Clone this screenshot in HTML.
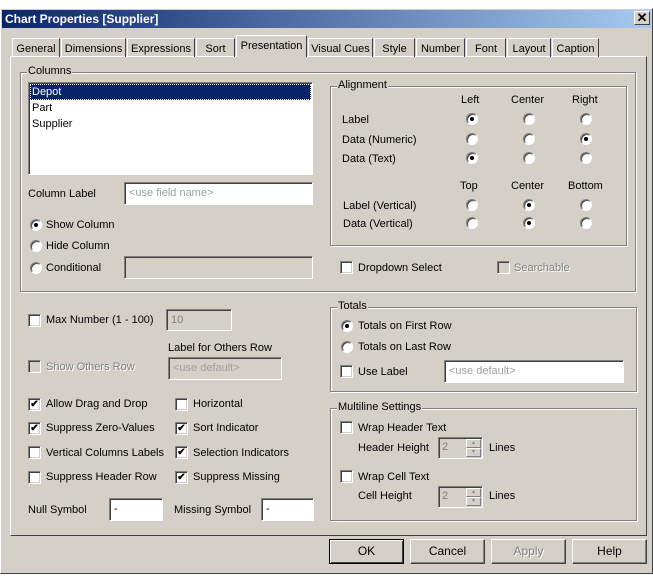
<!DOCTYPE html>
<html><head><meta charset="utf-8"><style>
*{box-sizing:border-box}
body{margin:0;width:653px;height:578px;background:#fff;position:relative;overflow:hidden;font-family:"Liberation Sans",sans-serif;font-size:11px;color:#000}
.a{position:absolute;white-space:nowrap}
.win{position:absolute;left:0;top:8px;width:653px;height:566px;background:#d4d0c8;border:1px solid #fff;border-right-color:#404040;border-bottom-color:#404040}
.title{position:absolute;left:2px;top:10px;width:649px;height:18px;background:linear-gradient(90deg,#0a246a,#a6caf0);color:#fff;font-weight:bold;font-size:12px;padding:2px 3px}
.tab{position:absolute;top:38px;height:19px;border:1px solid #fff;border-bottom:none;border-right:1px solid #404040;padding:4px 0 0;text-align:center;white-space:nowrap}
.panel{position:absolute;left:10px;top:56px;width:637px;height:480px;border:1px solid #fff;border-right-color:#404040;border-bottom-color:#404040}
.grp{position:absolute;border:1px solid #808080;box-shadow:1px 1px 0 #fff,inset 1px 1px 0 #fff}
.gl{position:absolute;background:#d4d0c8;padding:0 1px;top:-8px;left:6px}
.inp{position:absolute;background:#fff;border:1px solid #808080;border-right-color:#fff;border-bottom-color:#fff;box-shadow:inset 1px 1px 0 #404040;padding:4px 4px;color:#a0a0a0;white-space:nowrap}
.dis{background:#d4d0c8}
.cb{position:absolute;width:13px;height:13px;background:#fff;border:1px solid #808080;border-right-color:#fff;border-bottom-color:#fff;box-shadow:inset 1px 1px 0 #404040,inset -1px -1px 0 #d4d0c8;font-size:10px;line-height:11px;text-align:center;font-weight:bold}
.rb{position:absolute;width:12px;height:12px;border-radius:50%;background:#fff;border:1px solid #808080;border-right-color:#fff;border-bottom-color:#fff;box-shadow:inset 1px 1px 0 #404040}
.rb.on::after{content:"";position:absolute;left:3px;top:3px;width:4px;height:4px;border-radius:50%;background:#000}
.btn{position:absolute;top:539px;width:75px;height:25px;border:1px solid #fff;border-right-color:#404040;border-bottom-color:#404040;box-shadow:inset -1px -1px 0 #808080;text-align:center;line-height:22px;font-size:12px}
.gray{color:#808080;text-shadow:1px 1px 0 #fff}
.sb{position:absolute;left:466px;width:15px;height:9px;border:1px solid #fff;border-right-color:#808080;border-bottom-color:#808080;font-size:5px;text-align:center;color:#808080;line-height:7px}
</style></head><body>
<div class="win"></div>
<div class="title">Chart Properties [Supplier]</div>
<div class="a" style="left:634px;top:11px;width:16px;height:14px;background:#d4d0c8;border:1px solid #fff;border-right-color:#404040;border-bottom-color:#404040;font-size:13px;font-weight:bold;line-height:11px;text-align:center">✕</div>

<div class="panel"></div>
<div class="tab" style="left:12px;width:48px">General</div>
<div class="tab" style="left:61px;width:65px">Dimensions</div>
<div class="tab" style="left:127px;width:68px">Expressions</div>
<div class="tab" style="left:196px;width:39px">Sort</div>
<div class="tab" style="left:236px;top:35px;height:22px;width:71px;background:#d4d0c8;z-index:2">Presentation</div>
<div class="tab" style="left:308px;width:65px">Visual Cues</div>
<div class="tab" style="left:374px;width:41px">Style</div>
<div class="tab" style="left:416px;width:49px">Number</div>
<div class="tab" style="left:466px;width:40px">Font</div>
<div class="tab" style="left:507px;width:44px">Layout</div>
<div class="tab" style="left:552px;width:47px">Caption</div>

<div class="grp" style="left:20px;top:72px;width:616px;height:220px"><span class="gl">Columns</span></div>
<div class="a" style="left:28px;top:82px;width:285px;height:93px;background:#fff;border:1px solid #808080;border-right-color:#fff;border-bottom-color:#fff;box-shadow:inset 1px 1px 0 #404040"></div>
<div class="a" style="left:30px;top:84px;width:281px;height:16px;background:#0a246a;color:#fff;padding:2px 2px;outline:1px dotted #fff;outline-offset:-1px">Depot</div>
<div class="a" style="left:32px;top:102px">Part</div>
<div class="a" style="left:32px;top:118px">Supplier</div>
<div class="a" style="left:28px;top:188px">Column Label</div>
<div class="inp" style="left:124px;top:182px;width:189px;height:23px">&lt;use field name&gt;</div>
<div class="rb on" style="left:30px;top:219px"></div><div class="a" style="left:46px;top:219px">Show Column</div>
<div class="rb" style="left:30px;top:240px"></div><div class="a" style="left:46px;top:240px">Hide Column</div>
<div class="rb" style="left:30px;top:262px"></div><div class="a" style="left:46px;top:262px">Conditional</div>
<div class="inp dis" style="left:124px;top:256px;width:189px;height:23px"></div>

<div class="grp" style="left:330px;top:86px;width:297px;height:160px"><span class="gl">Alignment</span></div>
<div class="a" style="left:461px;top:94px">Left</div>
<div class="a" style="left:511px;top:94px">Center</div>
<div class="a" style="left:572px;top:94px">Right</div>
<div class="a" style="left:342px;top:114px">Label</div>
<div class="a" style="left:342px;top:134px">Data (Numeric)</div>
<div class="a" style="left:342px;top:153px">Data (Text)</div>
<div class="a" style="left:460px;top:180px">Top</div>
<div class="a" style="left:511px;top:180px">Center</div>
<div class="a" style="left:568px;top:180px">Bottom</div>
<div class="a" style="left:343px;top:200px">Label (Vertical)</div>
<div class="a" style="left:343px;top:218px">Data (Vertical)</div>
<div class="rb on" style="left:466px;top:113px"></div><div class="rb" style="left:523px;top:113px"></div><div class="rb" style="left:580px;top:113px"></div>
<div class="rb" style="left:466px;top:133px"></div><div class="rb" style="left:523px;top:133px"></div><div class="rb on" style="left:580px;top:133px"></div>
<div class="rb on" style="left:466px;top:152px"></div><div class="rb" style="left:523px;top:152px"></div><div class="rb" style="left:580px;top:152px"></div>
<div class="rb" style="left:466px;top:199px"></div><div class="rb on" style="left:523px;top:199px"></div><div class="rb" style="left:580px;top:199px"></div>
<div class="rb" style="left:466px;top:217px"></div><div class="rb on" style="left:523px;top:217px"></div><div class="rb" style="left:580px;top:217px"></div>
<div class="cb" style="left:340px;top:261px"></div><div class="a" style="left:358px;top:262px">Dropdown Select</div>
<div class="cb" style="left:497px;top:261px;background:#d4d0c8"></div><div class="a gray" style="left:514px;top:262px">Searchable</div>

<div class="cb" style="left:28px;top:314px"></div><div class="a" style="left:46px;top:314px">Max Number (1 - 100)</div>
<div class="inp dis" style="left:166px;top:309px;width:66px;height:22px;color:#808080">10</div>
<div class="a" style="left:168px;top:342px">Label for Others Row</div>
<div class="cb" style="left:28px;top:360px;background:#d4d0c8"></div><div class="a gray" style="left:46px;top:361px">Show Others Row</div>
<div class="inp dis" style="left:168px;top:357px;width:114px;height:23px">&lt;use default&gt;</div>

<div class="cb" style="left:28px;top:398px">✔</div><div class="a" style="left:46px;top:398px">Allow Drag and Drop</div>
<div class="cb" style="left:28px;top:422px">✔</div><div class="a" style="left:46px;top:422px">Suppress Zero-Values</div>
<div class="cb" style="left:28px;top:446px"></div><div class="a" style="left:46px;top:447px">Vertical Columns Labels</div>
<div class="cb" style="left:28px;top:471px"></div><div class="a" style="left:46px;top:471px">Suppress Header Row</div>
<div class="cb" style="left:175px;top:398px"></div><div class="a" style="left:193px;top:398px">Horizontal</div>
<div class="cb" style="left:175px;top:422px">✔</div><div class="a" style="left:193px;top:422px">Sort Indicator</div>
<div class="cb" style="left:175px;top:446px">✔</div><div class="a" style="left:193px;top:447px">Selection Indicators</div>
<div class="cb" style="left:175px;top:471px">✔</div><div class="a" style="left:193px;top:471px">Suppress Missing</div>
<div class="a" style="left:28px;top:504px">Null Symbol</div>
<div class="inp" style="left:109px;top:498px;width:54px;height:23px;color:#000">-</div>
<div class="a" style="left:174px;top:504px">Missing Symbol</div>
<div class="inp" style="left:261px;top:498px;width:53px;height:23px;color:#000">-</div>

<div class="grp" style="left:330px;top:307px;width:307px;height:85px"><span class="gl">Totals</span></div>
<div class="rb on" style="left:341px;top:320px"></div><div class="a" style="left:358px;top:320px">Totals on First Row</div>
<div class="rb" style="left:341px;top:341px"></div><div class="a" style="left:358px;top:341px">Totals on Last Row</div>
<div class="cb" style="left:340px;top:365px"></div><div class="a" style="left:358px;top:366px">Use Label</div>
<div class="inp" style="left:444px;top:360px;width:180px;height:23px">&lt;use default&gt;</div>

<div class="grp" style="left:330px;top:408px;width:307px;height:113px"><span class="gl">Multiline Settings</span></div>
<div class="cb" style="left:340px;top:421px"></div><div class="a" style="left:358px;top:422px">Wrap Header Text</div>
<div class="a" style="left:358px;top:442px">Header Height</div>
<div class="inp dis" style="left:438px;top:437px;width:45px;height:22px;color:#808080;padding:3px 3px">2</div>
<div class="sb" style="top:439px">▲</div><div class="sb" style="top:448px">▼</div>
<div class="a" style="left:489px;top:442px">Lines</div>
<div class="cb" style="left:340px;top:470px"></div><div class="a" style="left:358px;top:471px">Wrap Cell Text</div>
<div class="a" style="left:358px;top:490px">Cell Height</div>
<div class="inp dis" style="left:438px;top:486px;width:45px;height:22px;color:#808080;padding:3px 3px">2</div>
<div class="sb" style="top:488px">▲</div><div class="sb" style="top:497px">▼</div>
<div class="a" style="left:489px;top:490px">Lines</div>

<div class="btn" style="left:329px;border:1px solid #000;box-shadow:inset 1px 1px 0 #fff,inset -1px -1px 0 #404040">OK</div>
<div class="btn" style="left:410px">Cancel</div>
<div class="btn gray" style="left:491px">Apply</div>
<div class="btn" style="left:572px">Help</div>
</body></html>
